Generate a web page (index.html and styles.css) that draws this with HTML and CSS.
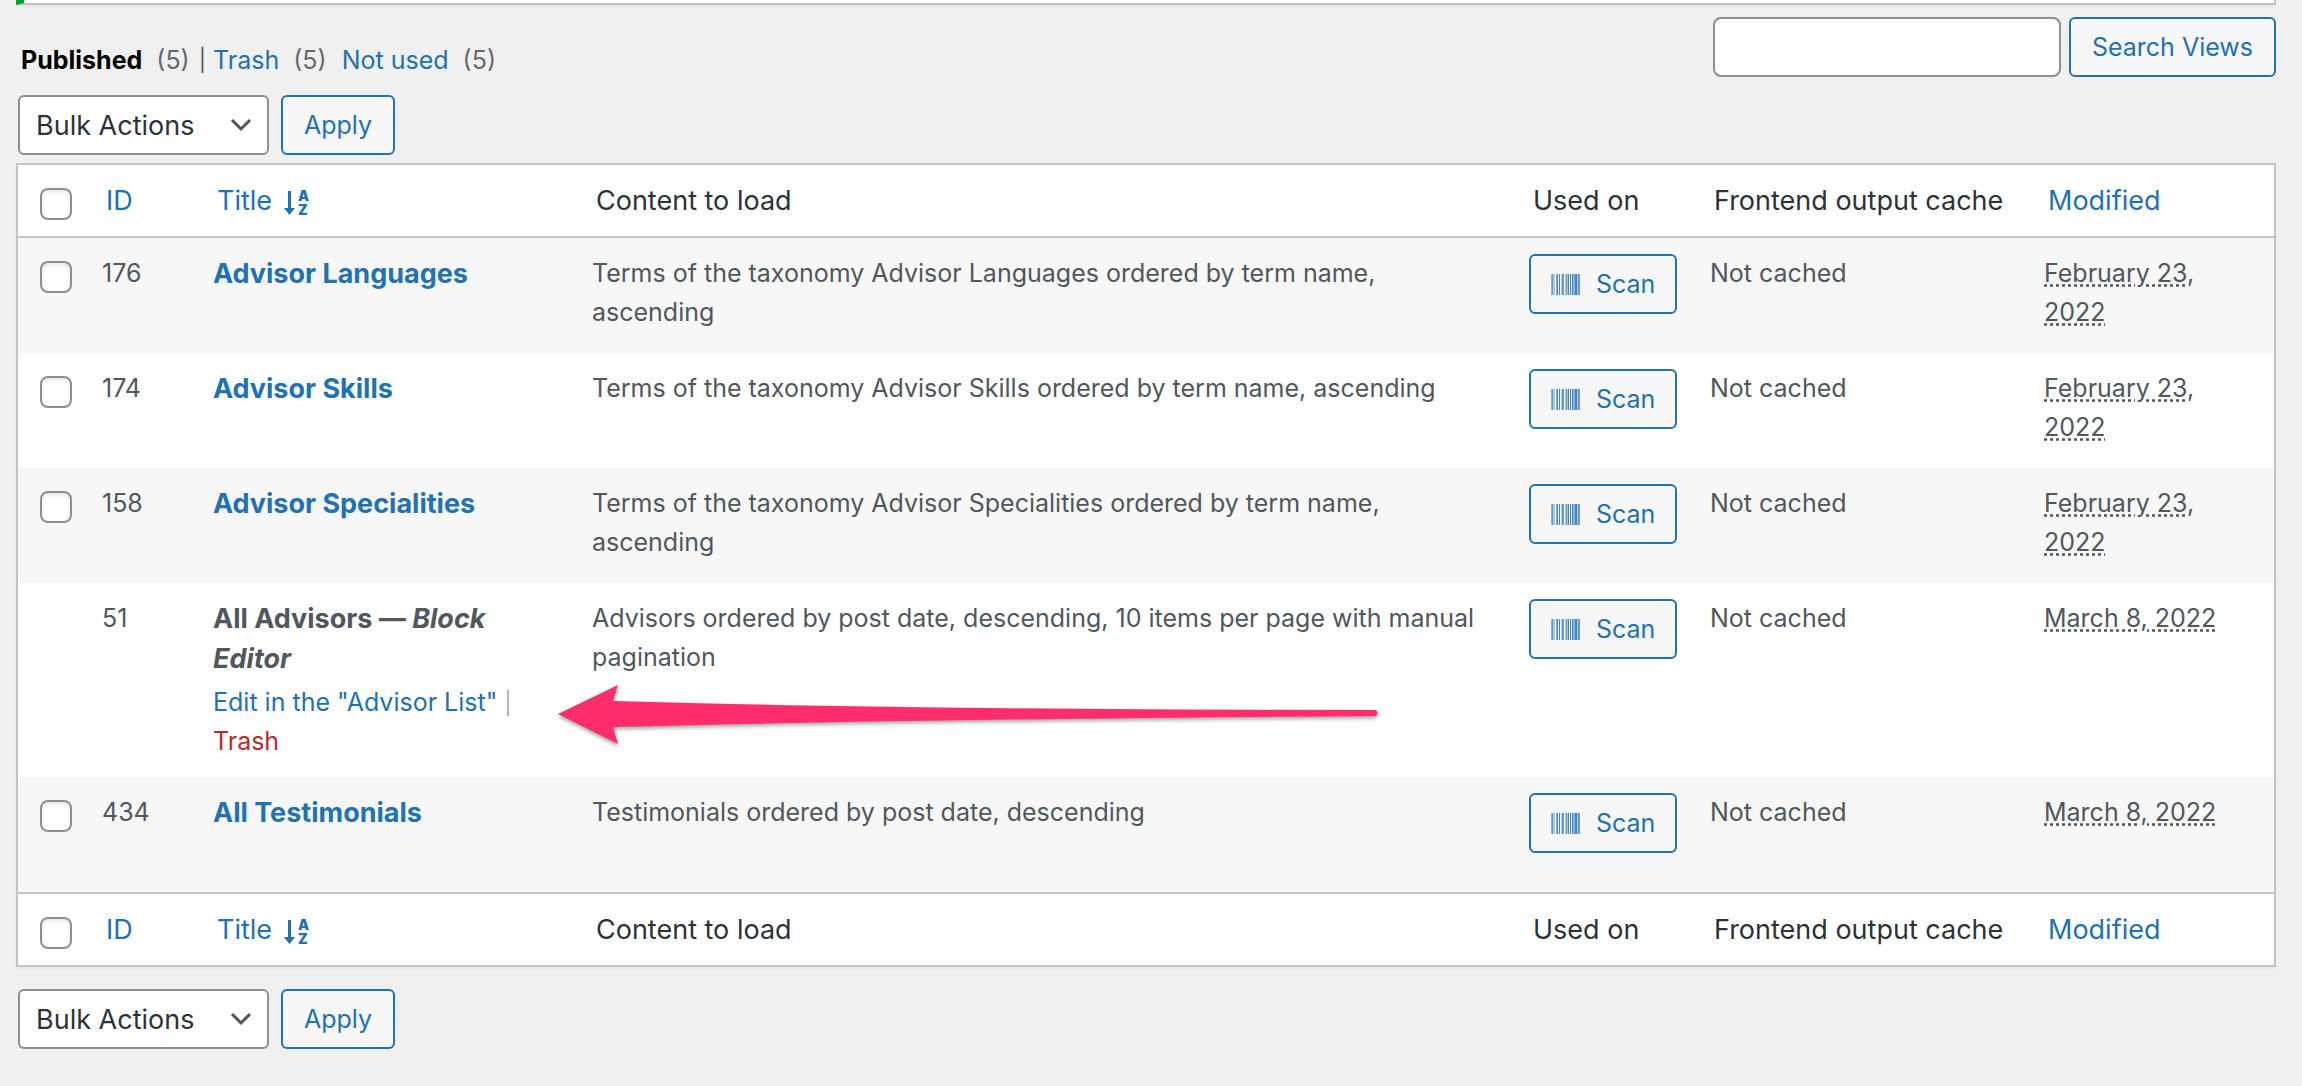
FILE: index.html
```html
<!DOCTYPE html>
<html lang="en">
<head>
    <title>Views</title>
    <meta charset="utf-8">
    <meta name="viewport" content="width=device-width, initial-scale=1">
    <link rel="stylesheet" href="styles.css">
</head>

<body>
    <!-- shared icon -->
    <svg class="icon-defs" aria-hidden="true">
        <symbol id="icon-barcode" viewBox="0 0 29 21">
            <path opacity=".35" d="M1 0h3v21H1zM10 0h3v21h-3zM14 0h3v21h-3zM26 0h3v21h-3z"/>
            <path opacity=".5" d="M0 0h2v21H0zM5 0h1v21H5zM11 0h2v21h-2zM15 0h1v21h-1zM22 0h2v21h-2zM27 0h2v21h-2z"/>
            <path opacity=".85" d="M6 0h1v21H6zM8 0h1v21H8zM17 0h1v21h-1zM19 0h1v21h-1zM21 0h1v21h-1zM24 0h2v21h-2z"/>
        </symbol>
    </svg>

    <div class="notice"></div>

    <div class="wrap">
        <div class="top-bar">
            <ul class="subsubsub">
                <li><b>Published</b> <span class="count">(5)</span> <span class="bar">|</span></li>
                <li><a href="#">Trash</a> <span class="count">(5)</span></li>
                <li><a href="#">Not used</a> <span class="count">(5)</span></li>
            </ul>
            <form class="search-box">
                <input type="search" class="search-input" aria-label="Search Views">
                <button type="submit" class="button">Search Views</button>
            </form>
        </div>

        <div class="tablenav">
            <select class="bulk-select" aria-label="Bulk Actions">
                <option>Bulk Actions</option>
            </select>
            <button type="button" class="button">Apply</button>
        </div>

        <table class="views-table">
            <colgroup>
                <col class="col-check">
                <col class="col-id">
                <col class="col-title">
                <col class="col-content">
                <col class="col-used">
                <col class="col-cache">
                <col class="col-modified">
            </colgroup>
            <thead>
                <tr>
                    <td class="check"><input type="checkbox" aria-label="Select all"></td>
                    <th><a href="#">ID</a></th>
                    <th>
                        <a href="#">Title
                            <svg class="icon-sort" viewBox="0 0 26 28">
                                <path d="M4 2h3v17h4l-5.500 7L0 19h4z"/>
                                <text x="14" y="12">A</text>
                                <text x="14" y="26">Z</text>
                            </svg>
                        </a>
                    </th>
                    <th>Content to load</th>
                    <th>Used on</th>
                    <th>Frontend output cache</th>
                    <th><a href="#">Modified</a></th>
                </tr>
            </thead>
            <tbody>
                <tr>
                    <td class="check"><input type="checkbox" aria-label="Select Advisor Languages"></td>
                    <td>176</td>
                    <td class="title"><a href="#">Advisor Languages</a></td>
                    <td>Terms of the taxonomy Advisor Languages ordered by term name, ascending</td>
                    <td><button type="button" class="button scan"><svg class="icon-barcode"><use href="#icon-barcode"/></svg>Scan</button></td>
                    <td>Not cached</td>
                    <td><abbr>February 23, 2022</abbr></td>
                </tr>
                <tr>
                    <td class="check"><input type="checkbox" aria-label="Select Advisor Skills"></td>
                    <td>174</td>
                    <td class="title"><a href="#">Advisor Skills</a></td>
                    <td>Terms of the taxonomy Advisor Skills ordered by term name, ascending</td>
                    <td><button type="button" class="button scan"><svg class="icon-barcode"><use href="#icon-barcode"/></svg>Scan</button></td>
                    <td>Not cached</td>
                    <td><abbr>February 23, 2022</abbr></td>
                </tr>
                <tr>
                    <td class="check"><input type="checkbox" aria-label="Select Advisor Specialities"></td>
                    <td>158</td>
                    <td class="title"><a href="#">Advisor Specialities</a></td>
                    <td>Terms of the taxonomy Advisor Specialities ordered by term name, ascending</td>
                    <td><button type="button" class="button scan"><svg class="icon-barcode"><use href="#icon-barcode"/></svg>Scan</button></td>
                    <td>Not cached</td>
                    <td><abbr>February 23, 2022</abbr></td>
                </tr>
                <tr>
                    <td class="check"></td>
                    <td>51</td>
                    <td>
                        <div class="title">All Advisors — <em>Block Editor</em></div>
                        <div class="row-actions"><a href="#">Edit in the "Advisor List"</a> <span class="sep">|</span> <a href="#" class="trash">Trash</a></div>
                    </td>
                    <td class="has-arrow">
                        Advisors ordered by post date, descending, 10 items per page with manual pagination
                        <svg class="arrow" viewBox="0 0 822 62" aria-hidden="true">
                            <path d="M0 30L60 1l-5 16Q360 26 818 26q3 3 0 6Q360 35 55 43l5 17z"/>
                        </svg>
                    </td>
                    <td><button type="button" class="button scan"><svg class="icon-barcode"><use href="#icon-barcode"/></svg>Scan</button></td>
                    <td>Not cached</td>
                    <td><abbr>March 8, 2022</abbr></td>
                </tr>
                <tr>
                    <td class="check"><input type="checkbox" aria-label="Select All Testimonials"></td>
                    <td>434</td>
                    <td class="title"><a href="#">All Testimonials</a></td>
                    <td>Testimonials ordered by post date, descending</td>
                    <td><button type="button" class="button scan"><svg class="icon-barcode"><use href="#icon-barcode"/></svg>Scan</button></td>
                    <td>Not cached</td>
                    <td><abbr>March 8, 2022</abbr></td>
                </tr>
            </tbody>
            <tfoot>
                <tr>
                    <td class="check"><input type="checkbox" aria-label="Select all"></td>
                    <th><a href="#">ID</a></th>
                    <th>
                        <a href="#">Title
                            <svg class="icon-sort" viewBox="0 0 26 28">
                                <path d="M4 2h3v17h4l-5.500 7L0 19h4z"/>
                                <text x="14" y="12">A</text>
                                <text x="14" y="26">Z</text>
                            </svg>
                        </a>
                    </th>
                    <th>Content to load</th>
                    <th>Used on</th>
                    <th>Frontend output cache</th>
                    <th><a href="#">Modified</a></th>
                </tr>
            </tfoot>
        </table>

        <div class="tablenav bottom">
            <select class="bulk-select" aria-label="Bulk Actions">
                <option>Bulk Actions</option>
            </select>
            <button type="button" class="button">Apply</button>
        </div>
    </div>
</body>
</html>
```
FILE: styles.css
```css
* {
    box-sizing: border-box;
}

body {
    margin: 0;
    padding: 0 26px 0 16px;
    background-color: #f0f0f0;
    color: #50575e;
    font-family: Inter, "Liberation Sans", sans-serif;
    font-size: 25px;
    line-height: 39px;
}

a {
    color: #2271b1;
    text-decoration: none;
}

.icon-defs {
    position: absolute;
    width: 0;
    height: 0;
}

.notice {
    height: 5px;
    background-color: #fff;
    border: 2px solid #c3c4c7;
    border-top: none;
    border-left: 8px solid #00a32a;
    box-shadow: 0 2px 2px rgba(0,0,0,.04);
}

.top-bar {
    display: flex;
    justify-content: space-between;
    align-items: flex-start;
    padding-top: 12px;
}

.subsubsub {
    display: flex;
    gap: 15px;
    margin: 0;
    padding: 24px 0 0 5px;
    list-style: none;
}

.subsubsub li {
    display: flex;
}

.subsubsub li:first-child {
    margin-right: -8px;
}

.subsubsub b {
    color: #000;
    font-weight: 700;
}

.count {
    margin-left: 14px;
    color: #646970;
}

.bar {
    margin-left: 9px;
    font-size: 22px;
}

.search-box {
    display: flex;
    gap: 8px;
}

.search-input {
    width: 348px;
    height: 60px;
    padding: 0 16px;
    background-color: #fff;
    border: 2px solid #8c8f94;
    border-radius: 8px;
    font: inherit;
}

.button {
    height: 60px;
    padding: 0 21px;
    background-color: #f7f7f7;
    border: 2px solid #2271b1;
    border-radius: 6px;
    color: #2271b1;
    font: inherit;
    white-space: nowrap;
    cursor: pointer;
}

.tablenav {
    display: flex;
    gap: 12px;
    padding: 15px 0 8px 2px;
}

.tablenav.bottom {
    padding-top: 22px;
}

.bulk-select {
    appearance: none;
    width: 251px;
    height: 60px;
    padding: 0 48px 0 16px;
    background: #fff url('data:image/svg+xml;utf8,<svg xmlns="http://www.w3.org/2000/svg" viewBox="0 0 22 14"><path d="M2 2l9 9 9-9" fill="none" stroke="%23555" stroke-width="3"/></svg>') no-repeat right 15px center / 22px 14px;
    border: 2px solid #8c8f94;
    border-radius: 6px;
    color: #2c3338;
    font: inherit;
    font-size: 27px;
}

.views-table {
    width: 100%;
    table-layout: fixed;
    border: 2px solid #c3c4c7;
    border-spacing: 0;
    background-color: #fff;
    box-shadow: 0 2px 2px rgba(0,0,0,.04);
}

.col-check {
    width: 64px;
}

.col-id {
    width: 111px;
}

.col-title {
    width: 379px;
}

.col-used {
    width: 181px;
}

.col-cache {
    width: 334px;
}

.col-modified {
    width: 250px;
}

.views-table th {
    padding: 16px 0 16px 24px;
    color: #2c3338;
    font-size: 27px;
    font-weight: 400;
    text-align: left;
    white-space: nowrap;
}

.views-table td {
    height: 115px;
    padding: 16px 20px;
    vertical-align: top;
}

.views-table thead td, .views-table tfoot td {
    height: 73px;
}

.views-table thead td, .views-table thead th {
    border-bottom: 2px solid #c3c4c7;
}

.views-table tfoot td, .views-table tfoot th {
    border-top: 2px solid #c3c4c7;
}

.views-table tbody tr:nth-child(odd) {
    background-color: #f7f7f7;
}

.views-table td.check {
    padding: 23px 0 0 22px;
    line-height: 0;
}

.check input {
    appearance: none;
    width: 32px;
    height: 32px;
    margin: 0;
    background-color: #fff;
    border: 2px solid #8c8f94;
    border-radius: 8px;
    box-shadow: inset 0 2px 4px rgba(0,0,0,.1);
}

.title {
    font-size: 27px;
    font-weight: 700;
    line-height: 40px;
}

.row-actions {
    padding-top: 4px;
}

.sep {
    color: #a7aaad;
    font-size: 22px;
    line-height: 22px;
}

.row-actions .trash {
    color: #b32d2e;
}

.button.scan {
    display: flex;
    align-items: center;
    gap: 16px;
    padding: 0 20px;
}

abbr {
    text-decoration: underline dotted;
}

.icon-barcode {
    width: 29px;
    height: 21px;
    fill: #2271b1;
}

.icon-sort {
    overflow: visible;
    width: 26px;
    height: 28px;
    margin-left: 4px;
    fill: #2271b1;
    font-size: 14px;
    font-weight: 900;
    vertical-align: -7px;
}

/* pointer laid over the row actions */
.has-arrow {
    position: relative;
}

.arrow {
    position: absolute;
    top: 101px;
    left: -14px;
    width: 822px;
    height: 62px;
    fill: #ff2d6c;
    filter: drop-shadow(0 2px 2px rgba(0,0,0,.4));
}
```
